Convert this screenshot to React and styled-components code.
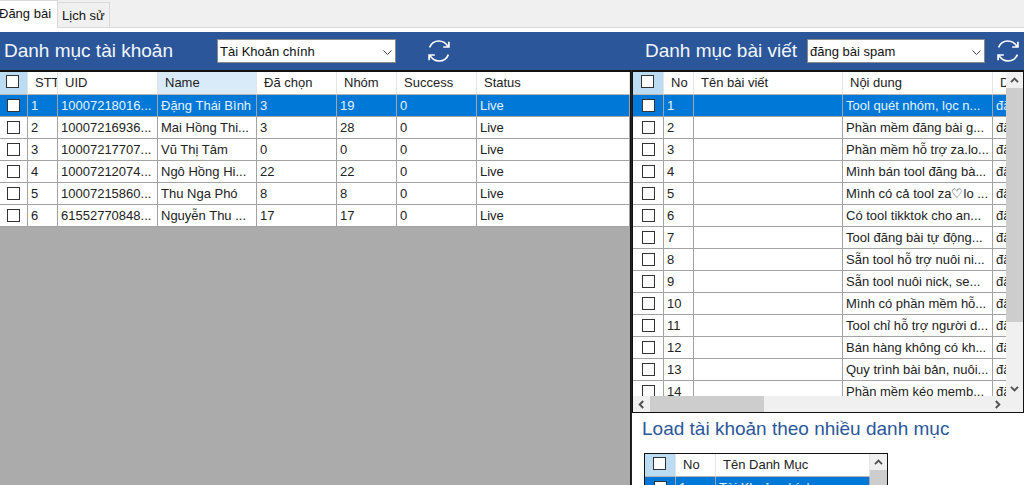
import React from "react";
import styled, { createGlobalStyle } from "styled-components";

const GlobalStyle = createGlobalStyle`
  *, *::before, *::after { box-sizing: border-box; }
  body {
    margin: 0;
    background: #fff;
    color: #222;
    font-family: "Liberation Sans", Arial, sans-serif;
    font-size: 13px;
  }
`;

const Window = styled.div`
  display: flex;
  flex-direction: column;
  height: 100vh;
  overflow: hidden;
`;

const TabStrip = styled.div`
  display: flex;
  align-items: flex-end;
  flex: none;
  height: 28px;
  margin-bottom: 4px;
  background: #f0f0f0;
  border-bottom: 1px solid #dcdcdc;
`;

const Tab = styled.button`
  height: ${(p) => (p.$active ? 28 : 25)}px;
  margin: 0 0 ${(p) => (p.$active ? -1 : 0)}px ${(p) => (p.$active ? -6 : 0)}px;
  padding: ${(p) => (p.$active ? "0 6px 2px 4px" : "0 4px")};
  border: 1px solid #d9d9d9;
  border-bottom: 0;
  border-left-width: ${(p) => (p.$active ? 1 : 0)}px;
  background: ${(p) => (p.$active ? "#fff" : "#f0f0f0")};
  color: #111;
  font: inherit;
  white-space: nowrap;
`;

const Toolbar = styled.header`
  display: flex;
  flex: none;
  height: 38px;
  background: #2b579a;
`;

const ToolGroup = styled.div`
  display: flex;
  align-items: center;
  ${(p) =>
    p.$side
      ? "flex: none; width: 392px; gap: 12px; padding: 0 5px 0 13px;"
      : "flex: 1; min-width: 0; gap: 32px; padding-left: 4px;"}
`;

const ToolTitle = styled.label`
  flex: none;
  width: ${(p) => p.$width}px;
  color: #f2f6fc;
  font-size: 19px;
  line-height: 36px;
  white-space: nowrap;
`;

const SelectBox = styled.div`
  position: relative;
  flex: ${(p) => (p.$grow ? "1" : "none")};
  width: 179px;
  height: 24px;

  svg {
    position: absolute;
    top: 9px;
    right: 4px;
    pointer-events: none;
  }
`;

const Select = styled.select`
  display: block;
  width: 100%;
  height: 100%;
  padding: 0 20px 0 2px;
  appearance: none;
  border: 1px solid #8a8a8a;
  border-radius: 0;
  background: #fff;
  color: #111;
  font: inherit;
`;

const IconButton = styled.button`
  display: grid;
  place-items: center;
  flex: none;
  width: 22px;
  height: 24px;
  padding: 0;
  border: 0;
  background: none;
  color: #fff;
`;

const Panels = styled.main`
  display: flex;
  flex: 1;
  min-height: 0;
`;

const AccountsPane = styled.section`
  flex: 1;
  min-width: 0;
  border: solid #111;
  border-width: 2px 1px 0 0;
  background: #ababab;
`;

const SidePane = styled.section`
  display: flex;
  flex-direction: column;
  flex: none;
  width: 393px;
  border-left: 1px solid #222;
`;

const GridFrame = styled.div`
  display: grid;
  grid-template-columns: minmax(0, 1fr) 17px;
  grid-template-rows: ${(p) => (p.$posts ? "324px 16px" : "minmax(0, 1fr)")};
  border: 1px solid #111;
  ${(p) =>
    p.$posts
      ? "flex: none; border-top-width: 2px;"
      : "flex: 1; min-height: 0; width: 244px; margin-left: 12px; border-bottom: 0;"}
`;

const Viewport = styled.div`
  overflow: hidden;
  min-width: 0;
`;

const Table = styled.table`
  width: ${(p) => (p.$width ? `${p.$width}px` : "100%")};
  table-layout: fixed;
  border-collapse: separate;
  border-spacing: 0;
  background: #fff;
`;

const HeadCell = styled.th`
  height: 23px;
  padding: 0 0 0 7px;
  overflow: hidden;
  border-right: 1px solid #e5e5e5;
  border-bottom: 1px solid #b5b5b5;
  background: ${(p) => (p.$sorted ? "#d9ebf9" : "#fff")};
  font-weight: 400;
  line-height: 20px;
  text-align: left;
  white-space: nowrap;
`;

const HeadCheckCell = styled(HeadCell)`
  padding: 0 2px 3px 0;
  background: #bcdcf4;
`;

const Row = styled.tr`
  background: ${(p) => (p.$selected ? "#0078d7" : "#fff")};
  color: ${(p) => (p.$selected ? "#e6f3ff" : "inherit")};
`;

const Cell = styled.td`
  height: 22px;
  padding: 1px 0 0 3px;
  overflow: hidden;
  border-right: 1px solid #a3a3a3;
  border-bottom: 1px solid #a3a3a3;
  line-height: 20px;
  white-space: nowrap;
`;

const CheckCell = styled(Cell)`
  padding: 0 0 1px;
`;

const Check = styled.input`
  display: block;
  width: 13px;
  height: 13px;
  margin: 0 auto;
  appearance: none;
  border: 1px solid #333;
  background: #fff;
`;

const ScrollBar = styled.div`
  display: flex;
  flex-direction: ${(p) => (p.$horizontal ? "row" : "column")};
  min-width: 0;
  min-height: 0;
  overflow: hidden;
  background: #f0f0f0;
`;

const ScrollButton = styled.button`
  display: grid;
  place-items: center;
  flex: none;
  width: 17px;
  height: 16px;
  padding: 0;
  border: 0;
  background: none;
  color: #505050;
`;

const Thumb = styled.div`
  flex: none;
  ${(p) => (p.$horizontal ? "width" : "height")}: ${(p) => p.$size}px;
  background: #cdcdcd;
`;

const Spacer = styled.div`
  flex: 1;
`;

const Corner = styled.div`
  background: #f0f0f0;
`;

const LoadTitle = styled.h2`
  flex: none;
  margin: 0;
  padding: 0 0 8px 10px;
  color: #2b579a;
  font-size: 19px;
  font-weight: 400;
  line-height: 32px;
  white-space: nowrap;
`;

const TURN = { up: 0, right: 90, down: 180, left: 270 };

function Arrow({ to, thin }) {
  return (
    <svg width="9" height="9" viewBox="0 0 9 9" fill="none" aria-hidden="true">
      <path
        d={thin ? "M0.5 6.5 L4.5 2.5 L8.5 6.5" : "M1 6.2 L4.5 2.7 L8 6.2"}
        transform={`rotate(${TURN[to]} 4.5 4.5)`}
        stroke={thin ? "#444" : "currentColor"}
        strokeWidth={thin ? 1 : 1.9}
      />
    </svg>
  );
}

function RefreshIcon() {
  return (
    <svg width="22" height="24" viewBox="0 0 22 24" fill="none" stroke="currentColor" strokeWidth="1.7" aria-hidden="true">
      <path d="M1.6 8.4 C3.4 4 6.8 2 10.8 2 C14.8 2 18 4 20.2 7.6" />
      <path d="M20.9 2.8 V8 H15.2" />
      <path d="M20.4 15.6 C18.6 20 15.2 22 11.2 22 C7.2 22 4 20 1.8 16.4" />
      <path d="M1.1 21.2 V16 H6.8" />
    </svg>
  );
}

function Combo({ id, value, grow }) {
  return (
    <SelectBox $grow={grow}>
      <Select id={id} defaultValue={value}>
        <option>{value}</option>
      </Select>
      <Arrow to="down" thin />
    </SelectBox>
  );
}

function DataTable({ columns, rows, width, sorted }) {
  return (
    <Table $width={width}>
      <colgroup>
        {columns.map((c) => (
          <col key={c.name} width={c.width} />
        ))}
      </colgroup>
      <thead>
        <tr>
          {columns.map((c) =>
            c.check ? (
              <HeadCheckCell key={c.name}>
                <Check type="checkbox" aria-label={c.name} />
              </HeadCheckCell>
            ) : (
              <HeadCell key={c.name} $sorted={sorted === c.name}>
                {c.name}
              </HeadCell>
            )
          )}
        </tr>
      </thead>
      <tbody>
        {rows.map((row, i) => (
          <Row key={row[0]} $selected={i === 0}>
            <CheckCell>
              <Check type="checkbox" aria-label={`Chọn ${row[0]}`} />
            </CheckCell>
            {row.map((value, j) => (
              <Cell key={j}>{value}</Cell>
            ))}
          </Row>
        ))}
      </tbody>
    </Table>
  );
}

function VerticalScroll({ size, full }) {
  return (
    <ScrollBar>
      <ScrollButton aria-label="Cuộn lên">
        <Arrow to="up" />
      </ScrollButton>
      <Thumb $size={size} />
      <Spacer />
      {full && (
        <ScrollButton aria-label="Cuộn xuống">
          <Arrow to="down" />
        </ScrollButton>
      )}
    </ScrollBar>
  );
}

const accountColumns = [
  { name: "Chọn tất cả", width: 28, check: true },
  { name: "STT", width: 30 },
  { name: "UID", width: 100 },
  { name: "Name", width: 99 },
  { name: "Đã chọn", width: 80 },
  { name: "Nhóm", width: 60 },
  { name: "Success", width: 80 },
  { name: "Status" },
];

const accounts = [
  ["1", "10007218016...", "Đặng Thái Bình", "3", "19", "0", "Live"],
  ["2", "10007216936...", "Mai Hồng Thi...", "3", "28", "0", "Live"],
  ["3", "10007217707...", "Vũ Thị Tâm", "0", "0", "0", "Live"],
  ["4", "10007212074...", "Ngô Hồng Hi...", "22", "22", "0", "Live"],
  ["5", "10007215860...", "Thu Nga Phó", "8", "8", "0", "Live"],
  ["6", "61552770848...", "Nguyễn Thu ...", "17", "17", "0", "Live"],
];

const postColumns = [
  { name: "Chọn tất cả", width: 31, check: true },
  { name: "No", width: 30 },
  { name: "Tên bài viết", width: 149 },
  { name: "Nội dung", width: 150 },
  { name: "Danh mục", width: 100 },
];

const posts = [
  "Tool quét nhóm, lọc n...",
  "Phần mềm đăng bài g...",
  "Phần mềm hỗ trợ za.lo...",
  "Mình bán tool đăng bà...",
  "Mình có cả tool za♡lo ...",
  "Có tool tikktok cho an...",
  "Tool đăng bài tự động...",
  "Sẵn tool hỗ trợ nuôi ni...",
  "Sẵn tool nuôi nick, se...",
  "Mình có phần mềm hỗ...",
  "Tool chỉ hỗ trợ người d...",
  "Bán hàng không có kh...",
  "Quy trình bài bản, nuôi...",
  "Phần mềm kéo memb...",
].map((text, i) => [String(i + 1), "", text, "đăng bài spam"]);

const categoryColumns = [
  { name: "Chọn tất cả", width: 31, check: true },
  { name: "No", width: 40 },
  { name: "Tên Danh Mục" },
];

const categories = [["1", "Tài Khoản chính"]];

export default function App() {
  return (
    <Window>
      <GlobalStyle />
      <TabStrip role="tablist">
        <Tab role="tab" aria-selected="true" $active>
          Đăng bài
        </Tab>
        <Tab role="tab" aria-selected="false">
          Lịch sử
        </Tab>
      </TabStrip>
      <Toolbar>
        <ToolGroup>
          <ToolTitle htmlFor="accounts" $width={181}>
            Danh mục tài khoản
          </ToolTitle>
          <Combo id="accounts" value="Tài Khoản chính" />
          <IconButton aria-label="Tải lại tài khoản">
            <RefreshIcon />
          </IconButton>
        </ToolGroup>
        <ToolGroup $side>
          <ToolTitle htmlFor="posts" $width={150}>
            Danh mục bài viết
          </ToolTitle>
          <Combo id="posts" value="đăng bài spam" grow />
          <IconButton aria-label="Tải lại bài viết">
            <RefreshIcon />
          </IconButton>
        </ToolGroup>
      </Toolbar>
      <Panels>
        <AccountsPane>
          <DataTable columns={accountColumns} rows={accounts} sorted="Name" />
        </AccountsPane>
        <SidePane>
          <GridFrame $posts>
            <Viewport>
              <DataTable columns={postColumns} rows={posts} width={460} />
            </Viewport>
            <VerticalScroll size={234} full />
            <ScrollBar $horizontal>
              <ScrollButton aria-label="Cuộn trái">
                <Arrow to="left" />
              </ScrollButton>
              <Thumb $horizontal $size={114} />
              <Spacer />
              <ScrollButton aria-label="Cuộn phải">
                <Arrow to="right" />
              </ScrollButton>
            </ScrollBar>
            <Corner />
          </GridFrame>
          <LoadTitle>Load tài khoản theo nhiều danh mục</LoadTitle>
          <GridFrame>
            <Viewport>
              <DataTable columns={categoryColumns} rows={categories} />
            </Viewport>
            <VerticalScroll size={60} />
          </GridFrame>
        </SidePane>
      </Panels>
    </Window>
  );
}
